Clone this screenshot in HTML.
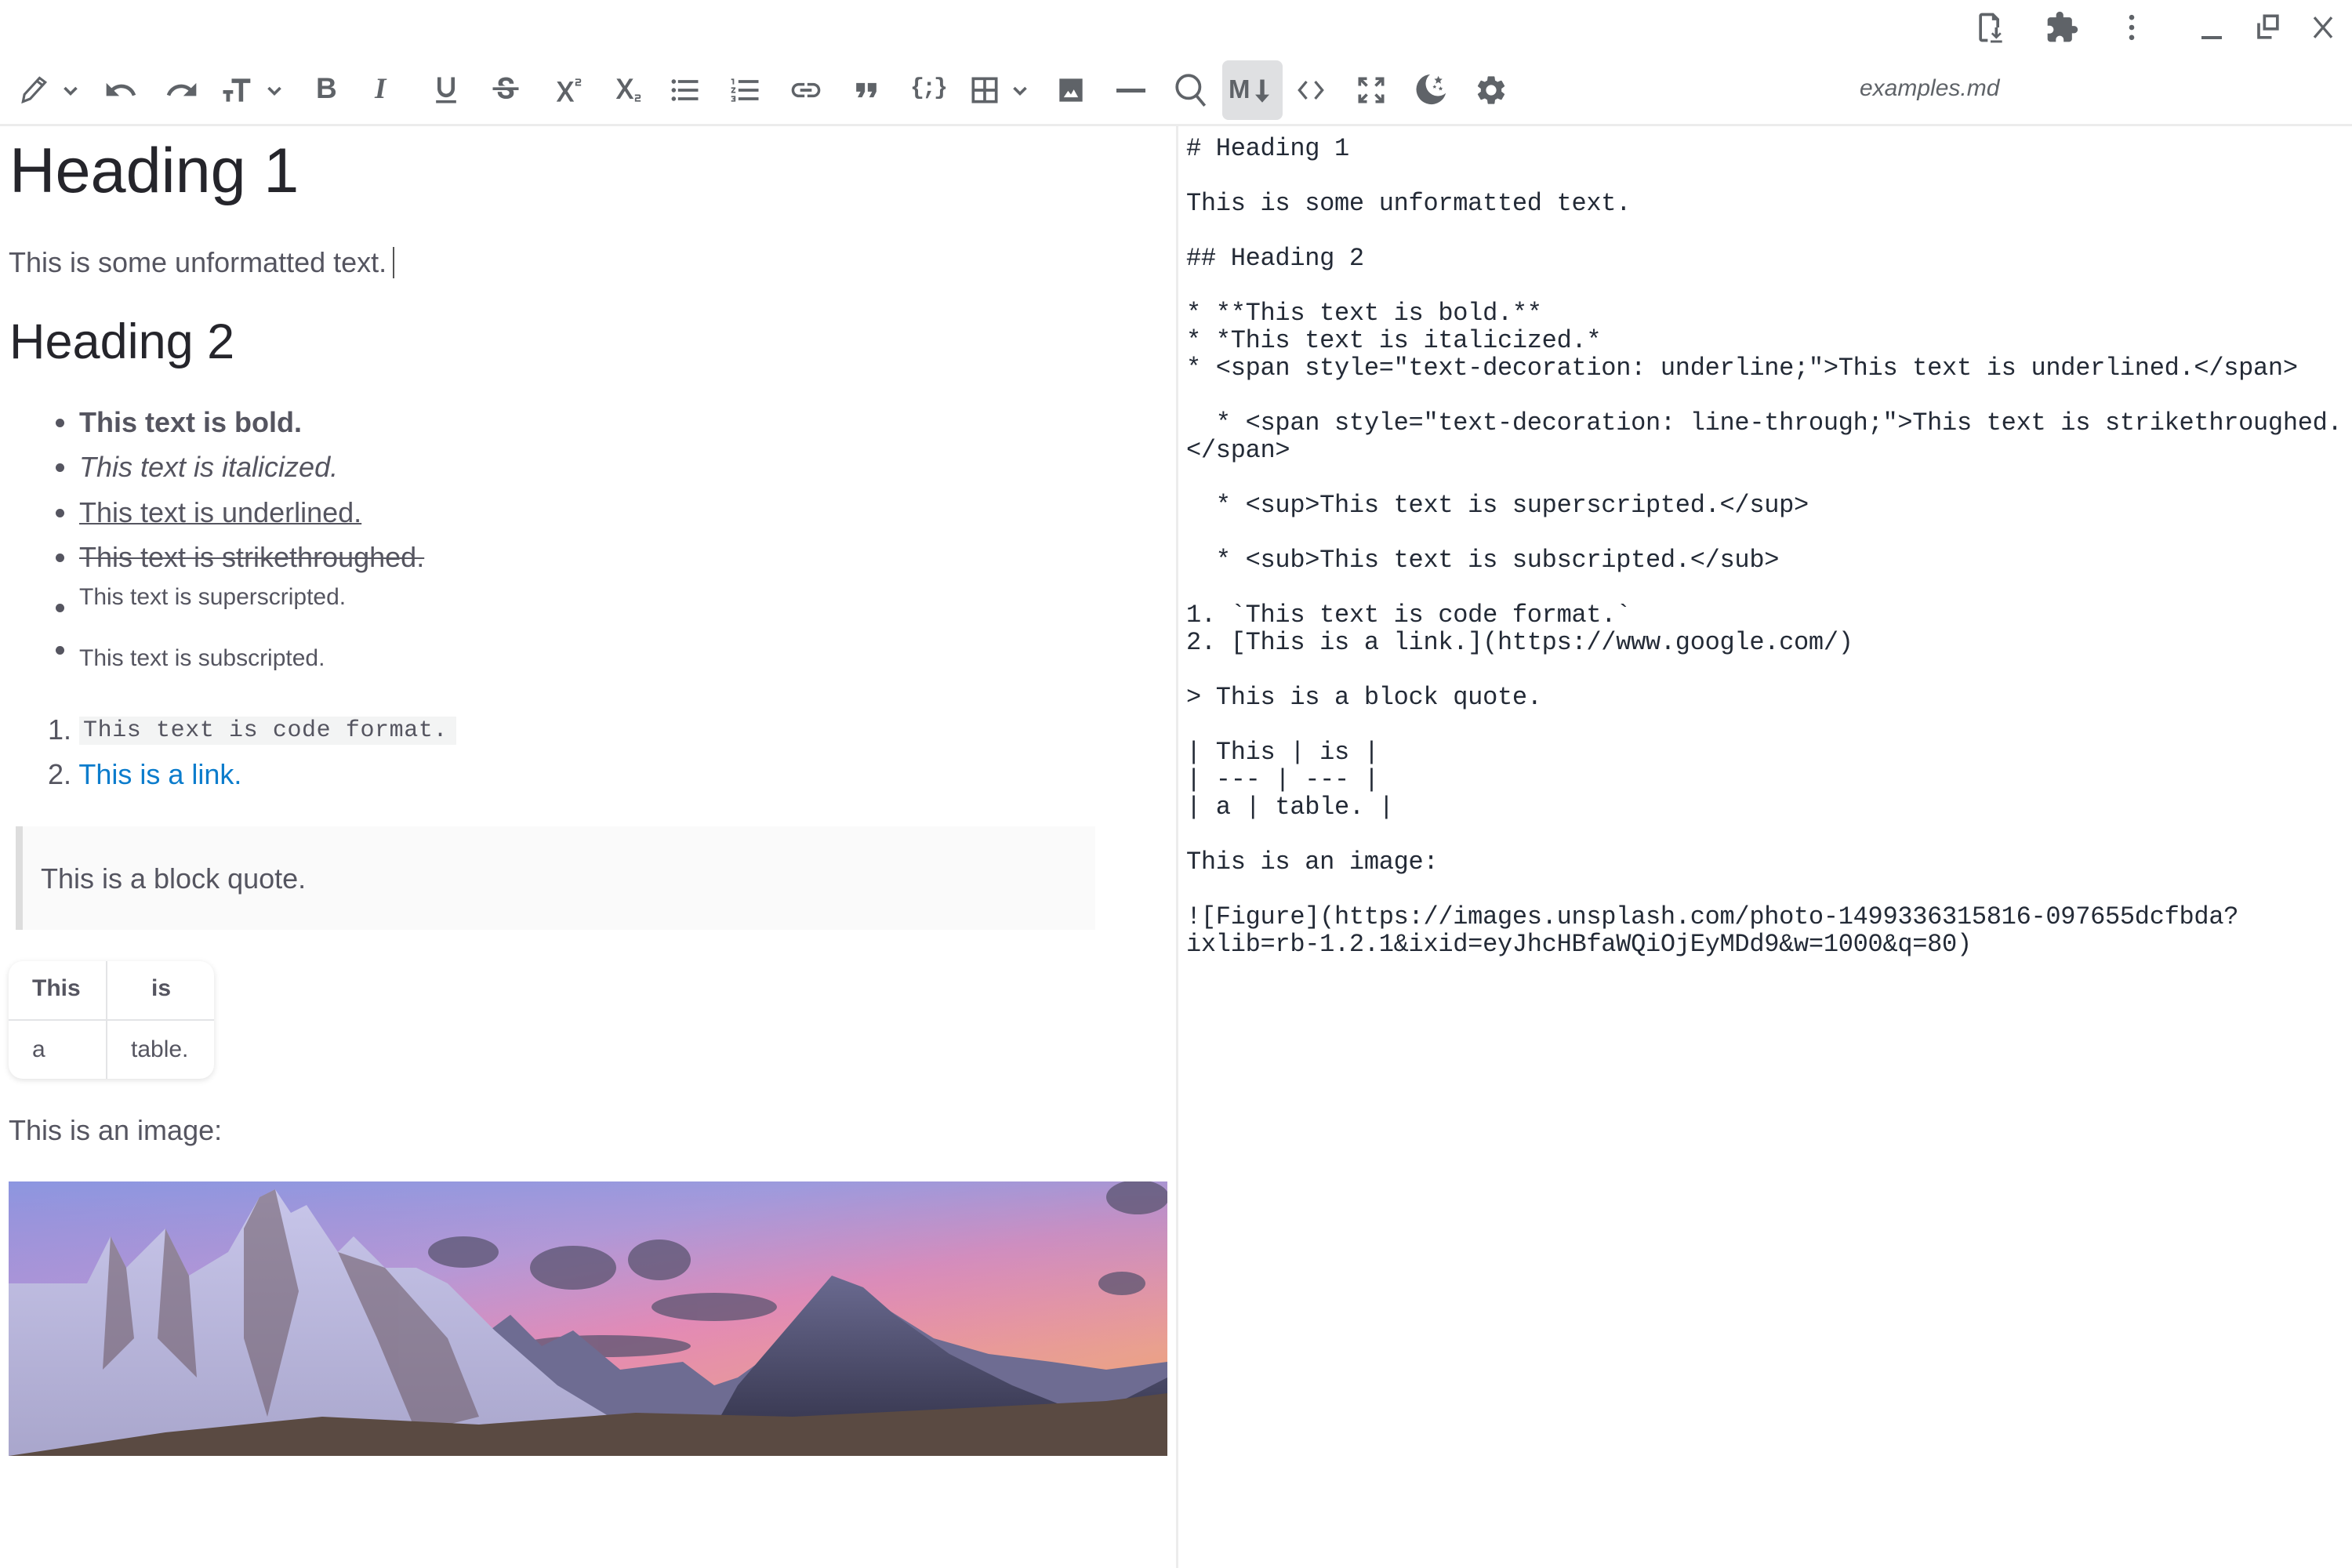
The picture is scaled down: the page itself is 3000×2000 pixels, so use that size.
<!DOCTYPE html>
<html><head><meta charset="utf-8"><style>
*{margin:0;padding:0;box-sizing:border-box}
html,body{width:3000px;height:2000px;background:#fff;overflow:hidden;position:relative;font-family:"Liberation Sans",sans-serif}
.ic{position:absolute;width:44px;height:44px;fill:#5f6368}
.ic.st{fill:none;stroke:#5f6368}
.abs{position:absolute;white-space:nowrap}
.tb{position:absolute;left:0;top:158px;width:3000px;height:3px;background:#ececec}
.div{position:absolute;left:1500px;top:160px;width:3px;height:1840px;background:#ececec}
pre{position:absolute;left:1513px;top:172px;font-family:"Liberation Mono",monospace;font-size:32px;line-height:35px;color:#232a36;letter-spacing:-0.3px}
.g{color:#555560}
.dot{position:absolute;width:11px;height:11px;border-radius:50%;background:#555560}
</style></head><body>
<!-- window controls -->
<svg class="ic" style="left:2517px;top:13px" viewBox="0 0 24 24"><path d="M6 2h8l4 4v6h-2V7h-3V4H6v16h4v2H6c-1.1 0-2-.9-2-2V4c0-1.1.9-2 2-2z"/><path d="M15 12h2v5l1.5-1.5 1 1L16 20l-3.5-3.5 1-1L15 17z"/><rect x="12" y="21" width="8" height="1.6"/></svg>
<svg class="ic" style="left:2608px;top:13px" viewBox="0 0 24 24"><path d="M20.5 11H19V7c0-1.1-.9-2-2-2h-4V3.5C13 2.12 11.88 1 10.5 1S8 2.12 8 3.5V5H4c-1.1 0-1.99.9-1.99 2v3.8H3.5c1.49 0 2.7 1.21 2.7 2.7s-1.21 2.7-2.7 2.7H2V20c0 1.1.9 2 2 2h3.8v-1.5c0-1.49 1.21-2.7 2.7-2.7 1.49 0 2.7 1.21 2.7 2.7V22H17c1.1 0 2-.9 2-2v-4h1.5c1.38 0 2.5-1.12 2.5-2.5S21.88 11 20.5 11z"/></svg>
<svg class="ic" style="left:2697px;top:13px" viewBox="0 0 24 24"><circle cx="12" cy="5" r="1.8"/><circle cx="12" cy="12" r="1.8"/><circle cx="12" cy="19" r="1.8"/></svg>
<div class="abs" style="left:2808px;top:46px;width:26px;height:4px;background:#5f6368"></div>
<svg class="ic st" style="left:2870px;top:13px" viewBox="0 0 24 24" stroke-width="2"><rect x="10" y="4" width="9" height="9"/><path d="M6 9v10h9"/></svg>
<svg class="ic st" style="left:2941px;top:13px" viewBox="0 0 24 24" stroke-width="1.8"><path d="M6 5l12 14M18 5L6 19"/></svg>

<!-- toolbar -->
<svg class="ic st" style="left:22px;top:93px" viewBox="0 0 24 24" stroke-width="1.7"><path d="M4 20l1-5L15.5 3.5l4 3L9 18z M4 20l5-2 M13.5 5.5l4 3"/></svg>
<svg class="ic st" style="left:72px;top:97px;width:36px;height:36px" viewBox="0 0 24 24" stroke-width="2.4"><path d="M7 10l5 5 5-5"/></svg>
<svg class="ic" style="left:132px;top:93px" viewBox="0 0 24 24"><path d="M12.5 8c-2.65 0-5.05.99-6.9 2.6L2 7v9h9l-3.62-3.62c1.39-1.16 3.16-1.88 5.12-1.88 3.54 0 6.55 2.31 7.6 5.5l2.37-.78C21.08 11.03 17.15 8 12.5 8z"/></svg>
<svg class="ic" style="left:210px;top:93px" viewBox="0 0 24 24"><path d="M18.4 10.6C16.55 8.99 14.15 8 11.5 8c-4.65 0-8.58 3.03-9.96 7.22L3.9 16c1.05-3.19 4.05-5.5 7.6-5.5 1.95 0 3.73.72 5.12 1.88L13 16h9V7l-3.6 3.6z"/></svg>
<svg class="ic" style="left:279px;top:93px" viewBox="0 0 24 24"><path d="M9 4v3h5v13h3V7h5V4z M3 12h7v2.5H7.8V20H5.2v-5.5H3z"/></svg>
<svg class="ic st" style="left:332px;top:97px;width:36px;height:36px" viewBox="0 0 24 24" stroke-width="2.4"><path d="M7 10l5 5 5-5"/></svg>
<div class="abs" style="left:403px;top:92px;font:bold 37px 'Liberation Sans';color:#5f6368">B</div>
<div class="abs" style="left:478px;top:92px;font:italic bold 37px 'Liberation Serif';color:#5f6368">I</div>
<svg class="ic" style="left:547px;top:93px" viewBox="0 0 24 24"><path d="M12 17c3.31 0 6-2.69 6-6V3h-2.5v8c0 1.93-1.57 3.5-3.5 3.5S8.5 12.93 8.5 11V3H6v8c0 3.31 2.69 6 6 6zm-7 2v2h14v-2H5z"/></svg>
<svg class="ic" style="left:623px;top:93px" viewBox="0 0 24 24"><path d="M6.85 7.08C6.85 4.37 9.45 3 12.24 3c1.64 0 3 .49 3.9 1.28.77.65 1.46 1.73 1.46 3.24h-3.01c0-.31-.05-.59-.15-.85-.29-.86-1.2-1.28-2.25-1.28-1.86 0-2.34 1.02-2.34 1.7 0 .48.25.88.74 1.21.38.25.77.48 1.41.7H7.39c-.21-.34-.54-.89-.54-1.92zM21 12v-2H3v2h9.62c1.15.45 1.96.75 1.96 1.97 0 1-.81 1.67-2.280 1.67-1.54 0-2.93-.54-2.93-2.51H6.4c0 .55.08 1.13.24 1.58.81 2.29 3.29 3.3 5.67 3.3 2.27 0 5.3-.89 5.3-4.05 0-.3-.01-1.16-.48-1.94H21V12z"/></svg>
<svg class="ic" style="left:699px;top:93px" viewBox="0 0 24 24"><path d="M22 7h-2v1h3v1h-4V7c0-.55.45-1 1-1h2V5h-3V4h3c.55 0 1 .45 1 1v1c0 .55-.45 1-1 1zM5.88 20h2.66l3.4-5.42h.12l3.4 5.42h2.66l-4.65-7.27L17.81 6h-2.68l-3.07 4.99h-.12L8.85 6H6.19l4.32 6.73L5.88 20z"/></svg>
<svg class="ic" style="left:775px;top:93px" viewBox="0 0 24 24"><path d="M22 18h-2v1h3v1h-4v-2c0-.55.45-1 1-1h2v-1h-3v-1h3c.55 0 1 .45 1 1v1c0 .55-.45 1-1 1zM5.88 18h2.66l3.4-5.42h.12l3.4 5.42h2.66l-4.65-7.27L17.81 4h-2.68l-3.07 4.99h-.12L8.85 4H6.19l4.32 6.73L5.88 18z"/></svg>
<svg class="ic" style="left:852px;top:93px" viewBox="0 0 24 24"><path d="M4 10.5c-.83 0-1.5.67-1.5 1.5s.67 1.5 1.5 1.5 1.5-.67 1.5-1.5-.67-1.5-1.5-1.5zm0-6c-.83 0-1.5.67-1.5 1.5S3.17 7.5 4 7.5 5.5 6.83 5.5 6 4.83 4.5 4 4.5zm0 12c-.83 0-1.5.68-1.5 1.5s.68 1.5 1.5 1.5 1.5-.68 1.5-1.5-.67-1.5-1.5-1.5zM7 19h14v-2H7v2zm0-6h14v-2H7v2zm0-8v2h14V5H7z"/></svg>
<svg class="ic" style="left:929px;top:93px" viewBox="0 0 24 24"><path d="M2 17h2v.5H3v1h1v.5H2v1h3v-4H2v1zm1-9h1V4H2v1h1v3zm-1 3h1.8L2 13.1v.9h3v-1H3.2L5 10.9V10H2v1zm5-6v2h14V5H7zm0 14h14v-2H7v2zm0-6h14v-2H7v2z"/></svg>
<svg class="ic" style="left:1006px;top:93px" viewBox="0 0 24 24"><path d="M3.9 12c0-1.71 1.39-3.1 3.1-3.1h4V7H7c-2.76 0-5 2.24-5 5s2.24 5 5 5h4v-1.9H7c-1.71 0-3.1-1.39-3.1-3.1zM8 13h8v-2H8v2zm9-6h-4v1.9h4c1.71 0 3.1 1.39 3.1 3.1s-1.39 3.1-3.1 3.1h-4V17h4c2.76 0 5-2.24 5-5s-2.24-5-5-5z"/></svg>
<svg class="ic" style="left:1083px;top:93px" viewBox="0 0 24 24"><path d="M6 17h3l2-4V7H5v6h3zm8 0h3l2-4V7h-6v6h3z"/></svg>
<div class="abs" style="left:1161px;top:96px;font:bold 30px 'Liberation Mono';color:#5f6368;letter-spacing:-3px">{;}</div>
<svg class="ic st" style="left:1234px;top:93px" viewBox="0 0 24 24" stroke-width="2"><rect x="4" y="4" width="16" height="16"/><path d="M12 4v16M4 12h16"/></svg>
<svg class="ic st" style="left:1283px;top:97px;width:36px;height:36px" viewBox="0 0 24 24" stroke-width="2.4"><path d="M7 10l5 5 5-5"/></svg>
<svg class="ic" style="left:1344px;top:93px" viewBox="0 0 24 24"><path d="M4 4h16v16H4z"/><path d="M7 17l3-4.5 2 2.5 2-3.5 3 5.5z" fill="#fff"/></svg>
<div class="abs" style="left:1424px;top:113px;width:37px;height:5px;background:#5f6368"></div>
<svg class="ic st" style="left:1495px;top:90px;width:50px;height:50px" viewBox="0 0 24 24" stroke-width="1.8"><circle cx="10" cy="10" r="7"/><path d="M15 15.5l5 6"/></svg>
<div class="abs" style="left:1559px;top:77px;width:77px;height:76px;background:#dfe0e2;border-radius:8px"></div>
<div class="abs" style="left:1567px;top:95px;font:bold 33px 'Liberation Sans';color:#5f6368">M</div>
<svg class="ic" style="left:1596px;top:97px;width:28px;height:36px" viewBox="0 0 12 16"><path d="M4.8 2h2.4v8.5H10l-4 4.5-4-4.5h2.8z"/></svg>
<svg class="ic st" style="left:1650px;top:93px" viewBox="0 0 24 24" stroke-width="1.8"><path d="M9 6l-5 6 5 6M15 6l5 6-5 6"/></svg>
<svg class="ic st" style="left:1727px;top:93px" viewBox="0 0 24 24" stroke-width="2"><path d="M4 9V4h5M4 4l5 5M20 9V4h-5M20 4l-5 5M4 15v5h5M4 20l5-5M20 15v5h-5M20 20l-5-5"/></svg>
<svg class="ic" style="left:1803px;top:91px;width:46px;height:46px" viewBox="0 0 24 24"><path d="M11 2a10 10 0 1 0 10.5 12.5A8 8 0 0 1 11 2z"/><path d="M16.5 3l.8 1.8 1.9.2-1.4 1.3.4 1.9-1.7-1-1.7 1 .4-1.9-1.4-1.3 1.9-.2zM18 10l.4.9 1 .1-.7.7.2 1-.9-.5-.9.5.2-1-.7-.7 1-.1zM14 9l.4.8.9.1-.7.6.2.9-.8-.5-.8.5.2-.9-.7-.6.9-.1z"/></svg>
<svg class="ic" style="left:1880px;top:93px" viewBox="0 0 24 24"><path d="M19.14 12.94c.04-.3.06-.61.06-.94 0-.32-.02-.64-.07-.94l2.03-1.58a.49.49 0 0 0 .12-.61l-1.92-3.32a.488.488 0 0 0-.59-.22l-2.39.96c-.5-.38-1.03-.7-1.62-.94l-.36-2.54a.484.484 0 0 0-.48-.41h-3.84c-.24 0-.43.17-.47.41l-.36 2.54c-.59.24-1.13.57-1.62.94l-2.39-.96c-.22-.08-.47 0-.59.22L2.74 8.87c-.12.21-.08.47.12.61l2.03 1.58c-.05.3-.09.63-.09.94s.02.64.07.94l-2.03 1.58a.49.49 0 0 0-.12.61l1.92 3.32c.12.22.37.29.59.22l2.39-.96c.5.38 1.03.7 1.62.94l.36 2.54c.05.24.24.41.48.41h3.84c.24 0 .44-.17.47-.41l.36-2.54c.59-.24 1.13-.56 1.62-.94l2.39.96c.22.08.47 0 .59-.22l1.92-3.32c.12-.22.07-.47-.12-.61l-2.01-1.58zM12 15.6c-1.98 0-3.6-1.62-3.6-3.6s1.62-3.6 3.6-3.6 3.6 1.62 3.6 3.6-1.62 3.6-3.6 3.6z"/></svg>
<div class="abs" style="left:2372px;top:96px;font:italic 30px 'Liberation Sans';color:#5f6368">examples.md</div>
<div class="tb"></div>
<div class="div"></div>

<!-- left preview -->
<div class="abs" style="left:12px;top:172px;font-size:81px;line-height:92px;color:#25252b">Heading 1</div>
<div class="abs g" style="left:11px;top:313px;font-size:36px;line-height:44px">This is some unformatted text.<span style="display:inline-block;width:2px;height:40px;background:#555;vertical-align:-8px;margin-left:8px"></span></div>
<div class="abs" style="left:12px;top:400px;font-size:63px;line-height:72px;color:#25252b">Heading 2</div>
<div class="abs g" style="left:101px;top:518px;font-size:36px;font-weight:bold">This text is bold.</div>
<div class="abs g" style="left:101px;top:575px;font-size:36px;font-style:italic">This text is italicized.</div>
<div class="abs g" style="left:101px;top:633px;font-size:36px;text-decoration:underline;text-decoration-thickness:2px">This text is underlined.</div>
<div class="abs g" style="left:101px;top:690px;font-size:36px;text-decoration:line-through;text-decoration-thickness:2px">This text is strikethroughed.</div>
<div class="abs g" style="left:101px;top:745px;font-size:30px">This text is superscripted.</div>
<div class="abs g" style="left:101px;top:823px;font-size:30px">This text is subscripted.</div>
<div class="dot" style="left:71px;top:534px"></div>
<div class="dot" style="left:71px;top:591px"></div>
<div class="dot" style="left:71px;top:649px"></div>
<div class="dot" style="left:71px;top:706px"></div>
<div class="dot" style="left:71px;top:770px"></div>
<div class="dot" style="left:71px;top:824px"></div>
<div class="abs g" style="left:61px;top:910px;font-size:36px">1.</div>
<div class="abs g" style="left:101px;top:914px;width:481px;height:36px;background:#f3f4f4;font-family:'Liberation Mono';font-size:30px;line-height:36px;padding-left:5px;letter-spacing:0.6px">This text is code format.</div>
<div class="abs g" style="left:61px;top:967px;font-size:36px">2. <span style="color:#0b7ccc">This is a link.</span></div>
<div class="abs" style="left:20px;top:1054px;width:1377px;height:132px;background:#fafafa;border-left:9px solid #dddddd"></div>
<div class="abs g" style="left:52px;top:1100px;font-size:36px">This is a block quote.</div>
<div class="abs" style="left:11px;top:1226px;width:262px;height:150px;border-radius:18px;box-shadow:0 2px 8px rgba(0,0,0,0.12);background:#fff;overflow:hidden">
 <div style="position:absolute;left:124px;top:0;width:2px;height:150px;background:#e3e4e6"></div>
 <div style="position:absolute;left:0;top:74px;width:262px;height:2px;background:#e3e4e6"></div>
 <div class="abs g" style="left:30px;top:18px;font-size:30px;font-weight:bold">This</div>
 <div class="abs g" style="left:182px;top:18px;font-size:30px;font-weight:bold">is</div>
 <div class="abs g" style="left:30px;top:96px;font-size:30px">a</div>
 <div class="abs g" style="left:156px;top:96px;font-size:30px">table.</div>
</div>
<div class="abs g" style="left:11px;top:1421px;font-size:36px">This is an image:</div>

<svg class="abs" style="left:11px;top:1507px" width="1478" height="350" viewBox="0 0 1478 350" preserveAspectRatio="none">
<defs>
<linearGradient id="sky" x1="0" y1="0" x2="1" y2="1"><stop offset="0" stop-color="#8e90e0"/><stop offset="0.35" stop-color="#b79ad8"/><stop offset="0.55" stop-color="#e48ab4"/><stop offset="0.8" stop-color="#e9a08e"/><stop offset="1" stop-color="#f2a55c"/></linearGradient>
<linearGradient id="sky2" x1="0" y1="0" x2="0" y2="1"><stop offset="0" stop-color="#8a9ae0" stop-opacity="0.6"/><stop offset="0.6" stop-color="#d88ac0" stop-opacity="0"/></linearGradient>
<linearGradient id="snow" x1="0" y1="0" x2="0" y2="1"><stop offset="0" stop-color="#c8c6ea"/><stop offset="1" stop-color="#a9a6cc"/></linearGradient>
<linearGradient id="dark" x1="0" y1="0" x2="0" y2="1"><stop offset="0" stop-color="#6a6a90"/><stop offset="1" stop-color="#2e2e44"/></linearGradient>
</defs>
<rect width="1478" height="350" fill="url(#sky)"/>
<rect width="1478" height="350" fill="url(#sky2)"/>
<g fill="#5a5470" opacity="0.75"><ellipse cx="580" cy="90" rx="45" ry="20"/><ellipse cx="720" cy="110" rx="55" ry="28"/><ellipse cx="830" cy="100" rx="40" ry="26"/><ellipse cx="900" cy="160" rx="80" ry="18"/><ellipse cx="260" cy="150" rx="120" ry="28"/><ellipse cx="80" cy="190" rx="90" ry="18"/><ellipse cx="1440" cy="20" rx="40" ry="22"/><ellipse cx="1420" cy="130" rx="30" ry="15"/><ellipse cx="760" cy="210" rx="110" ry="14"/></g>
<polygon fill="#6e6c92" points="580,350 600,200 640,170 680,210 720,190 780,240 860,230 900,260 930,250 1000,200 1060,130 1100,150 1180,200 1250,220 1330,230 1400,240 1478,230 1478,350"/>
<polygon fill="url(#dark)" points="880,350 930,260 990,190 1050,120 1090,135 1130,170 1200,220 1280,260 1380,300 1478,250 1478,350"/>
<polygon fill="url(#snow)" points="0,350 0,130 40,130 100,130 130,70 150,110 200,60 230,120 280,90 320,20 340,10 360,40 380,30 420,90 440,70 480,110 520,110 560,130 620,190 700,260 800,320 860,350"/>
<g fill="#6a5560" opacity="0.55"><polygon points="300,60 320,20 340,10 370,140 330,300 300,200"/><polygon points="420,90 480,110 560,200 600,300 520,320 470,200"/><polygon points="130,70 150,110 160,200 120,240"/><polygon points="200,60 230,120 240,250 190,200"/></g>
<polygon fill="#5a4a42" points="0,350 200,320 400,300 600,310 800,295 1000,300 1200,290 1400,280 1478,270 1478,350"/>
</svg>

<pre># Heading 1

This is some unformatted text.

## Heading 2

* **This text is bold.**
* *This text is italicized.*
* &lt;span style="text-decoration: underline;"&gt;This text is underlined.&lt;/span&gt;

  * &lt;span style="text-decoration: line-through;"&gt;This text is strikethroughed.
&lt;/span&gt;

  * &lt;sup&gt;This text is superscripted.&lt;/sup&gt;

  * &lt;sub&gt;This text is subscripted.&lt;/sub&gt;

1. `This text is code format.`
2. [This is a link.](https://www.google.com/)

&gt; This is a block quote.

| This | is |
| --- | --- |
| a | table. |

This is an image:

![Figure](https://images.unsplash.com/photo-1499336315816-097655dcfbda?
ixlib=rb-1.2.1&amp;ixid=eyJhcHBfaWQiOjEyMDd9&amp;w=1000&amp;q=80)</pre>
</body></html>
